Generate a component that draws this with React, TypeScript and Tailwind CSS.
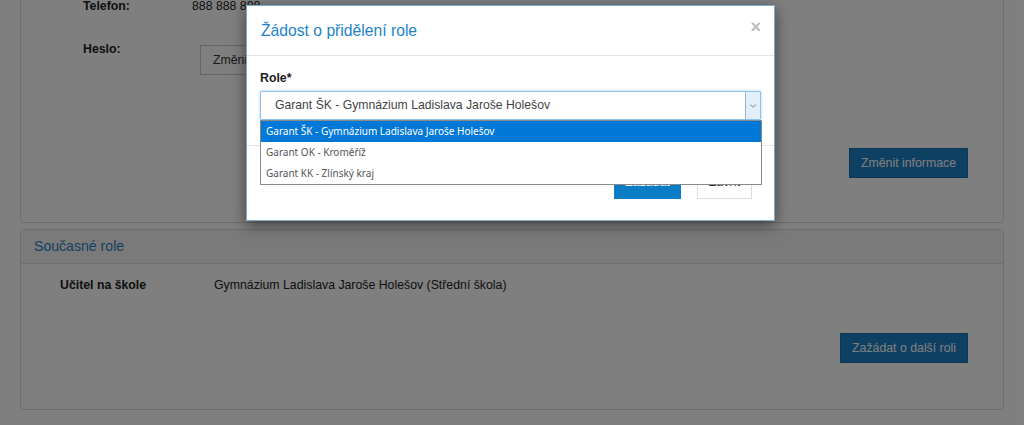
import { ChevronDown } from 'lucide-react'

const options = [
  'Garant ŠK - Gymnázium Ladislava Jaroše Holešov',
  'Garant OK - Kroměříž',
  'Garant KK - Zlínský kraj',
]

function Button({ children, primary }: { children: string; primary?: boolean }) {
  return (
    <button
      className={
        primary
          ? 'h-[30px] px-[11px] bg-[#1b80c4] text-white text-[12.3px] border border-[#176fa9]'
          : 'h-[30px] px-[11px] bg-white text-[#333] text-[12.3px] border border-[#ccc]'
      }
    >
      {children}
    </button>
  )
}

function RoleModal() {
  return (
    <div className="absolute left-[246px] top-[5px] w-[529px] bg-white border border-[#7fa9c9] shadow-[0_4px_14px_rgba(0,0,0,0.5)]">
      <div className="h-[50px] flex items-center justify-between px-[14px] border-b border-[#e5e5e5]">
        <h4 className="text-[15.7px] text-[#2183cb] mt-[1px]">Žádost o přidělení role</h4>
        <span className="text-[#bbb] text-[18px] font-bold leading-none -mr-[1px] -mt-[8px]">×</span>
      </div>

      <div className="relative px-[13px] pt-[14px] pb-[25px]">
        <label className="block text-[12.3px] font-bold text-[#222] leading-[16px]">Role*</label>
        <div className="mt-[5px] h-[29px] flex border border-[#8fc1ea] rounded-[1px] shadow-[0_0_3px_rgba(102,175,233,0.6)]">
          <div className="flex-1 flex items-center pl-[14px] text-[12.2px] text-[#444]">{options[0]}</div>
          <div className="w-[15px] flex items-center justify-center bg-[#e3eef8] border-l border-[#8ab8e0]">
            <ChevronDown className="w-[10px] h-[10px] text-[#444]" strokeWidth={1.5} />
          </div>
        </div>

        <ul className="absolute left-[13px] top-[64px] w-[502px] bg-white border border-[#8a8a8a] font-['Noto_Sans',sans-serif] text-[10px] z-10">
          {options.map((o, i) => (
            <li
              key={o}
              className={
                i === 0
                  ? 'h-[21px] flex items-center pl-[5px] bg-[#0078d7] text-white'
                  : 'h-[21px] flex items-center pl-[5px] text-[#555]'
              }
            >
              {o}
            </li>
          ))}
        </ul>
      </div>

      <div className="flex justify-end gap-[16px] px-[22px] pt-[19px] pb-[21px] border-t border-[#e5e5e5]">
        <button className="h-[34px] w-[67px] bg-[#0b7dc7] text-white text-[12.3px]">Zažádat</button>
        <button className="h-[34px] w-[55px] bg-white text-[#333] text-[12.3px] border border-[#ddd]">Zavřít</button>
      </div>
    </div>
  )
}

export default function App() {
  return (
    <main className="relative h-[425px] w-[1024px] overflow-hidden bg-white font-['Liberation_Sans',Arial,sans-serif]">
      <div className="px-5 flex flex-col gap-[6px] -mt-[30px]">
        <div className="h-[253px] border border-[#ddd] rounded-[4px] pt-[25px] pl-[62px] pr-[35px]">
          <div className="flex text-[12.3px] leading-[20px]">
            <span className="w-[109px] font-bold text-[#222]">Telefon:</span>
            <span className="text-[#222]">888 888 888</span>
          </div>
          <div className="flex mt-[26px]">
            <span className="w-[117px] text-[12.3px] font-bold text-[#222] leading-[20px] -mt-[3px]">Heslo:</span>
            <button className="h-[30px] px-3 text-[12.3px] text-[#333] bg-white border border-[#ccc] mt-[3px]">
              Změnit heslo
            </button>
          </div>
          <div className="flex justify-end mt-[73px]">
            <Button primary>Změnit informace</Button>
          </div>
        </div>

        <div className="h-[181px] border border-[#ddd] rounded-[4px]">
          <div className="h-[34px] bg-[#f5f5f5] border-b border-[#ddd] flex items-center px-[13px]">
            <h3 className="text-[14.1px] text-[#2a7fc0]">Současné role</h3>
          </div>
          <div className="pl-[39px] pr-[35px] pt-[11px]">
            <div className="flex text-[12.3px] leading-[20px] text-[#222]">
              <span className="w-[154px] font-bold">Učitel na škole</span>
              <span>Gymnázium Ladislava Jaroše Holešov (Střední škola)</span>
            </div>
            <div className="flex justify-end mt-[38px]">
              <Button primary>Zažádat o další roli</Button>
            </div>
          </div>
        </div>
      </div>

      <div className="absolute inset-0 bg-black/50" />
      <RoleModal />
    </main>
  )
}
